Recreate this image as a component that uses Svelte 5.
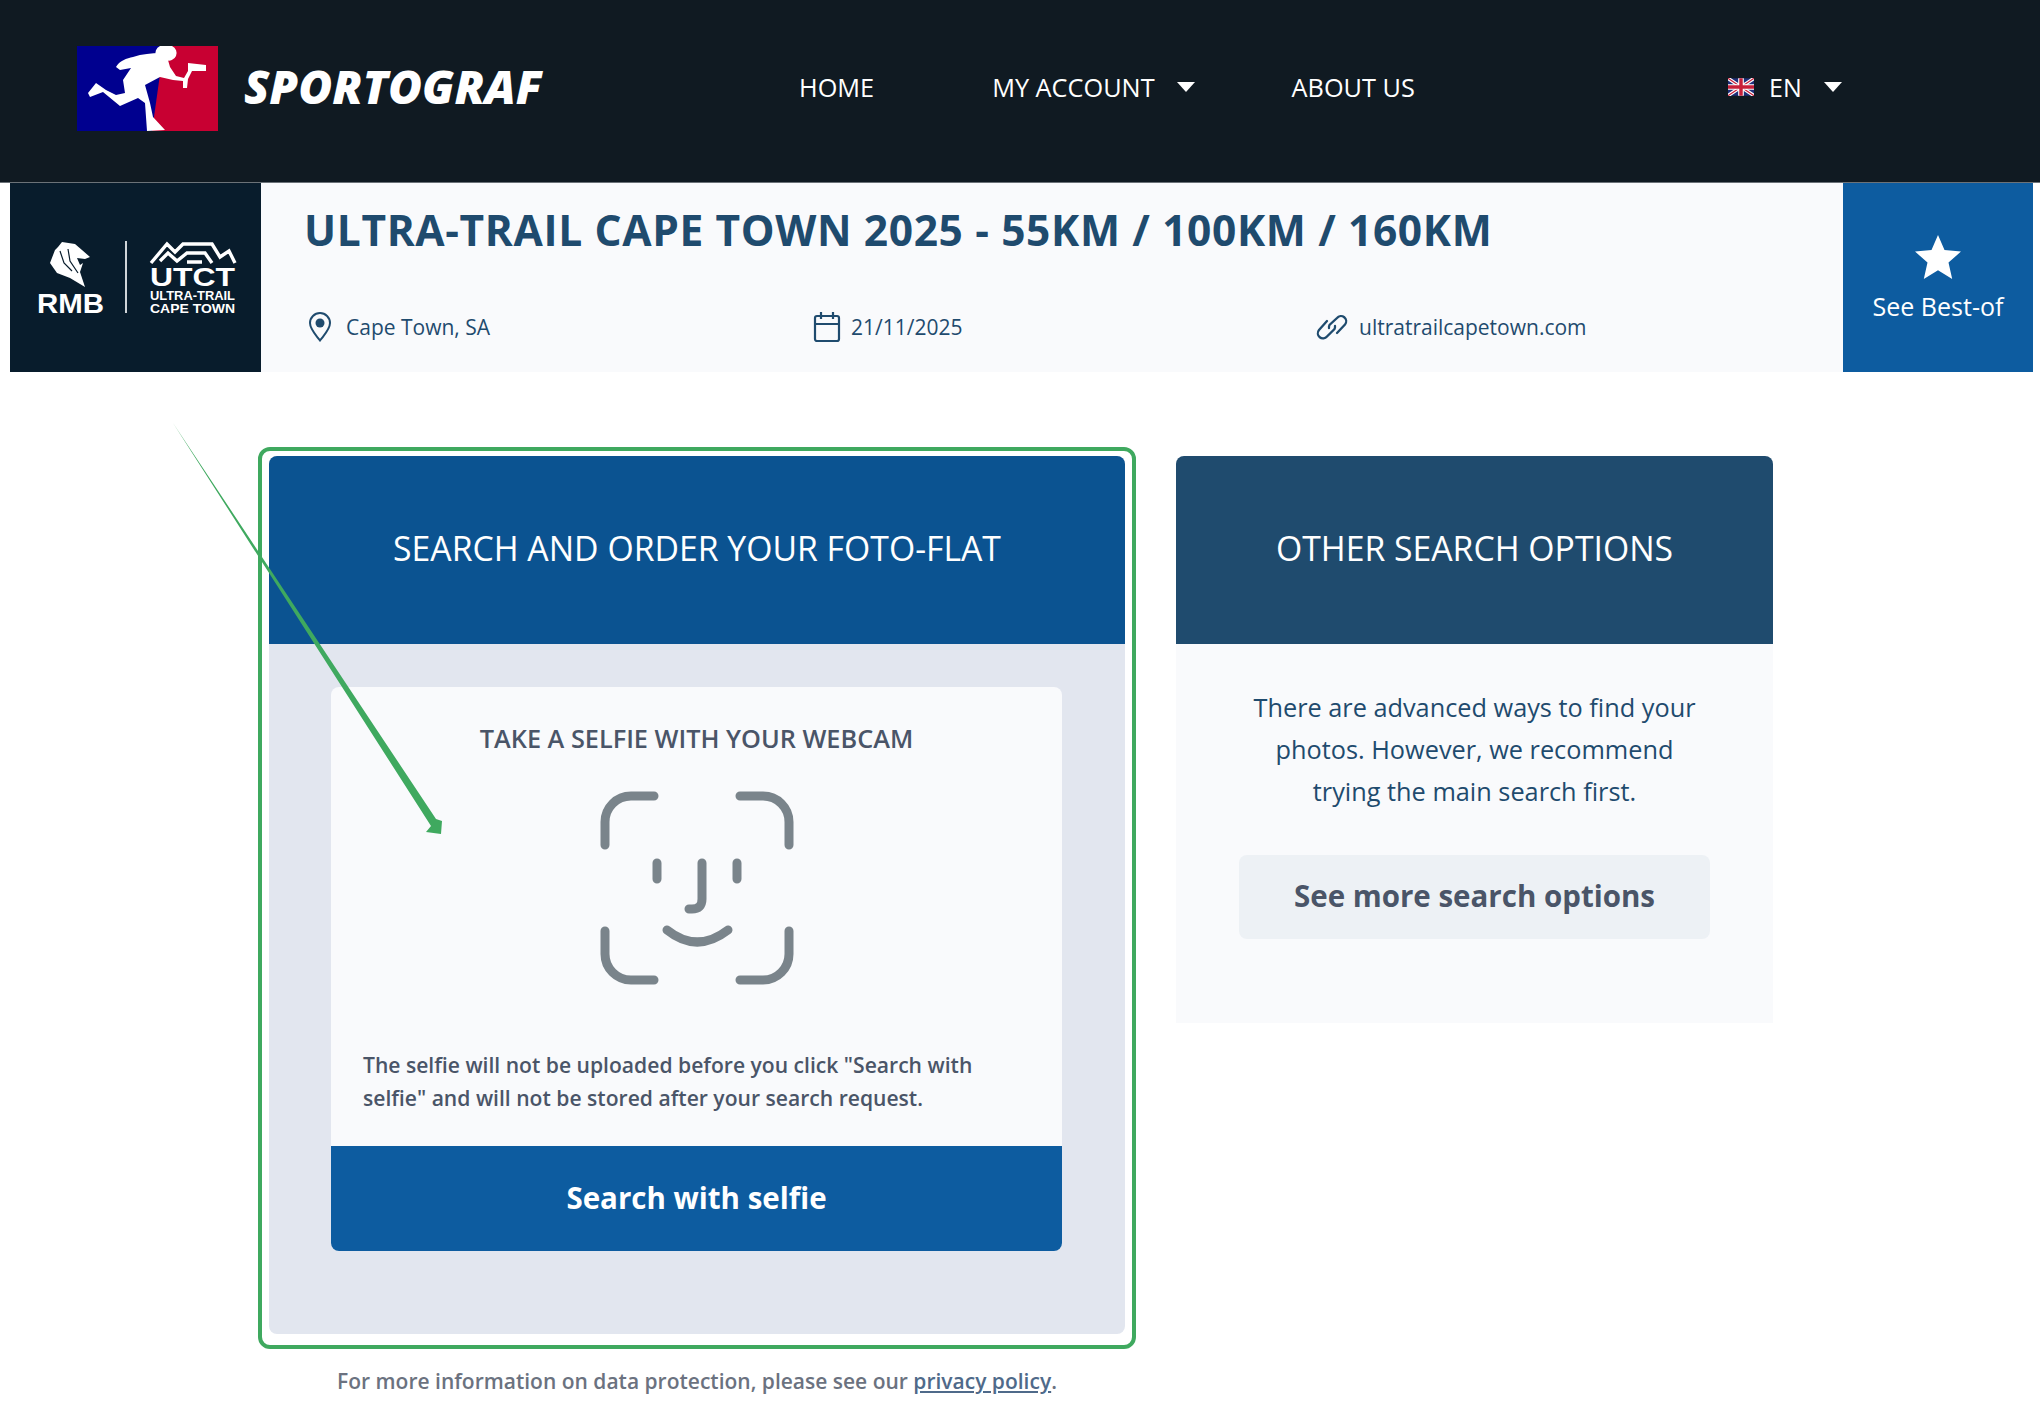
<script>
  const navItems = [
    { label: 'HOME', caret: false },
    { label: 'MY ACCOUNT', caret: true },
    { label: 'ABOUT US', caret: false }
  ]
</script>

<header class="topbar">
  <a class="brand" href="#home">
    <svg class="brand-mark" width="141" height="85" viewBox="0 0 141 85" aria-hidden="true">
      <rect width="141" height="85" fill="#c80032" />
      <polygon points="0,0 87,0 75,85 0,85" fill="#00008f" />
      <path fill="#fff" d="M83 0 H95 A7.5 7.5 0 0 1 89 14 A7.5 7.5 0 0 1 83 0 Z" />
      <path
        fill="#fff"
        d="M39 21 C42 15 50 12 56 11 C65 8 75 7 83 7 L91 14 L93 21 L99 30 L107 32 L111 25 L111 17 L129 19 L129 25 L115 25 L111 33 L110 42 L106 42 L106 35 L96 34 L83 31 L68 39 L73 57 L76 71 L88 84 L70 85 L68 57 L61 52 L43 60 L26 46 L13 51 L11 47 L19 37 L29 44 L39 49 L48 47 L46 34 L54 22 L43 24 Z"
      />
    </svg>
    <span class="brand-name">SPORTOGRAF</span>
  </a>

  <nav class="nav">
    {#each navItems as item}
      <a href="#nav" class="nav-link">
        {item.label}
        {#if item.caret}<span class="caret"></span>{/if}
      </a>
    {/each}
  </nav>

  <div class="lang">
    <svg width="26" height="18" viewBox="0 0 60 40" aria-hidden="true">
      <rect width="60" height="40" fill="#1f2f7a" />
      <path d="M0 0 L60 40 M60 0 L0 40" stroke="#fff" stroke-width="8" />
      <path d="M0 0 L60 40 M60 0 L0 40" stroke="#c8203a" stroke-width="3" />
      <path d="M30 0 V40 M0 20 H60" stroke="#fff" stroke-width="13" />
      <path d="M30 0 V40 M0 20 H60" stroke="#c8203a" stroke-width="8" />
    </svg>
    <span>EN</span>
    <span class="caret"></span>
  </div>
</header>

<section class="event">
  <svg class="event-logo" width="251" height="189" viewBox="0 0 251 189" aria-hidden="true">
    <rect width="251" height="189" fill="#081c2c" />
    <path
      fill="#fff"
      d="M52 59 L65 61 L72 67 L80 74 L75 76 L67 75 L70 82 L73 80 L70 89 L75 104 L60 95 L47 90 L40 80 L45 67 L48 64 Z"
    />
    <path fill="none" stroke="#081c2c" stroke-width="1.2" d="M50 68 L54 80 L62 88 M58 66 L60 78 L68 90" />
    <text x="27" y="130" class="rmb" textLength="67" lengthAdjust="spacingAndGlyphs">RMB</text>
    <rect x="115" y="58" width="2" height="72" fill="#cfd4d8" />
    <path
      fill="none"
      stroke="#fff"
      stroke-width="3.4"
      d="M141 80 L157 61 L165 69 L173 61 L202 61 L210 74 L219 68 L225 80 M150 78 L158 70 L167 78 L177 70 L195 70 L202 80 M177 79 L192 79"
    />
    <text x="140" y="103" class="utct" textLength="85" lengthAdjust="spacingAndGlyphs">UTCT</text>
    <text x="140" y="117" class="utct-sub" textLength="85" lengthAdjust="spacingAndGlyphs">ULTRA-TRAIL</text>
    <text x="140" y="130" class="utct-sub" textLength="85" lengthAdjust="spacingAndGlyphs">CAPE TOWN</text>
  </svg>

  <div class="event-info">
    <h1>ULTRA-TRAIL CAPE TOWN 2025 - 55KM / 100KM / 160KM</h1>
    <div class="meta">
      <div class="meta-item">
        <svg width="26" height="30" viewBox="0 0 26 30" fill="none" stroke="#1f4b6e" stroke-width="2" aria-hidden="true">
          <path d="M13 28.5 C8 22 3 17 3 11 A10 10 0 0 1 23 11 C23 17 18 22 13 28.5 Z" />
          <circle cx="13" cy="11" r="4.5" fill="#1f4b6e" stroke="none" />
        </svg>
        <span>Cape Town, SA</span>
      </div>
      <div class="meta-item date">
        <svg width="28" height="32" viewBox="0 0 28 32" fill="none" stroke="#1f4b6e" stroke-width="2.2" aria-hidden="true">
          <rect x="2" y="5" width="24" height="25" rx="2" />
          <path d="M2 13 H26 M8 1 V8 M20 1 V8" />
        </svg>
        <span>21/11/2025</span>
      </div>
      <div class="meta-item link">
        <svg width="32" height="26" viewBox="0 0 32 26" fill="none" stroke="#1f4b6e" stroke-width="2.3" stroke-linecap="round" aria-hidden="true">
          <path d="M13 14 A5 5 0 0 1 13.5 11 L21 4 A5 5 0 0 1 29 10.5 L21 19" />
          <path d="M19 12 A5 5 0 0 1 18.5 15 L11 22.5 A5 5 0 0 1 3 16 L11 7" />
        </svg>
        <span>ultratrailcapetown.com</span>
      </div>
    </div>
  </div>

  <a class="best-of" href="#best">
    <svg width="46" height="44" viewBox="0 0 46 44" aria-hidden="true">
      <polygon fill="#fff" points="23,0 29.5,15 46,16.6 33.5,27.4 37.2,44 23,35.2 8.8,44 12.5,27.4 0,16.6 16.5,15" />
    </svg>
    <span>See Best-of</span>
  </a>
</section>

<main class="content">
  <div class="left-col">
    <section class="card primary">
      <h2 class="card-head">SEARCH AND ORDER YOUR FOTO-FLAT</h2>
      <div class="card-body">
        <div class="selfie">
          <h3>TAKE A SELFIE WITH YOUR WEBCAM</h3>
          <svg class="face" width="200" height="200" viewBox="0 0 200 200" fill="none" stroke="#7a848b" stroke-width="9" stroke-linecap="round" aria-hidden="true">
            <path d="M8 56 V33 A26 26 0 0 1 34 7 H57" />
            <path d="M143 7 H166 A26 26 0 0 1 192 33 V56" />
            <path d="M8 142 V165 A26 26 0 0 0 34 191 H57" />
            <path d="M143 191 H166 A26 26 0 0 0 192 165 V142" />
            <path d="M60 74 V90 M140 74 V90" />
            <path d="M105 74 V110 Q105 120 95 120 H92" />
            <path d="M70 141 Q100 165 131 141" />
          </svg>
          <p>The selfie will not be uploaded before you click "Search with selfie" and will not be stored after your search request.</p>
          <button class="selfie-btn">Search with selfie</button>
        </div>
      </div>
    </section>
    <div class="frame"></div>
    <p class="privacy">For more information on data protection, please see our <a href="#privacy">privacy policy</a>.</p>
  </div>

  <section class="card secondary">
    <h2 class="card-head">OTHER SEARCH OPTIONS</h2>
    <div class="card-body">
      <p>There are advanced ways to find your photos. However, we recommend trying the main search first.</p>
      <button class="more-btn">See more search options</button>
    </div>
  </section>
</main>

<!-- annotation arrow drawn over the page -->
<svg class="arrow" width="2040" height="1420" viewBox="0 0 2040 1420" aria-hidden="true">
  <polygon fill="#3fa95f" points="173,423 436,819 442,821 441,834 426,832 431,826" />
</svg>

<style>
  :global(body) {
    margin: 0;
    background: #fff;
    font-family: 'Open Sans', 'Noto Sans', sans-serif;
  }

  h1, h2, h3, p {
    margin: 0;
  }

  a {
    color: inherit;
    text-decoration: none;
  }

  .topbar {
    height: 183px;
    box-sizing: border-box;
    background: #101a22;
    color: #fff;
    display: flex;
    align-items: center;
    padding: 0 0 9px 77px;
    border-bottom: 1px solid #6b7278;
  }

  .brand {
    display: flex;
    align-items: center;
    gap: 26px;
    width: 722px;
    margin-top: 4px;
  }

  .brand-name {
    font-size: 46.3px;
    font-weight: 800;
    font-style: italic;
    margin-bottom: 4px;
  }

  .nav {
    display: flex;
    align-items: center;
    gap: 97px;
    width: 929px;
    font-size: 25.3px;
  }

  .nav-link {
    display: flex;
    align-items: center;
    gap: 22px;
  }

  .nav-link:first-child {
    margin-right: 21px;
  }

  .caret {
    width: 0;
    height: 0;
    border-left: 9px solid transparent;
    border-right: 9px solid transparent;
    border-top: 10px solid #fff;
  }

  .lang {
    display: flex;
    align-items: center;
    gap: 15px;
    font-size: 25px;
  }

  .lang .caret {
    margin-left: 7px;
  }

  .event {
    display: flex;
    height: 189px;
    margin: 0 7px 0 10px;
    background: #f9fafc;
  }

  .event-logo {
    flex: none;
  }

  .event-logo text {
    fill: #fff;
    font-family: 'Liberation Sans', sans-serif;
  }

  .rmb {
    font-size: 28px;
    font-weight: 700;
  }

  .utct {
    font-size: 25px;
    font-weight: 700;
  }

  .utct-sub {
    font-size: 13px;
    font-weight: 700;
  }

  .event-info {
    flex: 1;
    padding: 19px 0 0 43px;
  }

  h1 {
    font-size: 42.5px;
    line-height: 56px;
    font-weight: 700;
    color: #1f4b6e;
    letter-spacing: 0.63px;
  }

  .meta {
    display: grid;
    grid-template-columns: 506px 503px auto;
    margin-top: 49px;
    padding-left: 3px;
    font-size: 21px;
    color: #1f4b6e;
  }

  .meta-item {
    display: flex;
    align-items: center;
    gap: 13px;
    height: 40px;
  }

  .meta-item.date {
    gap: 10px;
  }

  .meta-item.link {
    gap: 11px;
  }

  .best-of {
    flex: none;
    width: 190px;
    box-sizing: border-box;
    padding-top: 3px;
    background: #0d5ca0;
    color: #fff;
    font-size: 25px;
    display: flex;
    flex-direction: column;
    align-items: center;
    justify-content: center;
    gap: 10px;
  }

  .content {
    display: flex;
    align-items: flex-start;
    gap: 51px;
    padding: 84px 0 0 269px;
  }

  .left-col {
    position: relative;
    width: 856px;
  }

  .card {
    border-radius: 8px 8px 0 0;
    overflow: hidden;
    background: #f9fafc;
  }

  .card.primary {
    background: #e2e6ef;
    border-radius: 8px;
    height: 878px;
  }

  .card.secondary {
    width: 597px;
    height: 567px;
  }

  .card-head {
    height: 188px;
    box-sizing: border-box;
    padding-bottom: 4px;
    display: flex;
    align-items: center;
    justify-content: center;
    color: #fff;
    font-size: 33.75px;
    font-weight: 400;
  }

  .primary .card-head {
    background: #0b5391;
  }

  .secondary .card-head {
    background: #1f4b6e;
  }

  .primary .card-body {
    padding: 43px 63px 0 62px;
  }

  .selfie {
    background: #f9fafc;
    border-radius: 8px;
    height: 564px;
    display: flex;
    flex-direction: column;
    align-items: center;
    overflow: hidden;
  }

  h3 {
    margin-top: 34px;
    font-size: 25.3px;
    line-height: 34px;
    font-weight: 600;
    color: #4a5568;
  }

  .face {
    margin-top: 34px;
    display: block;
  }

  .selfie p {
    align-self: stretch;
    padding: 0 32px;
    margin-top: 60px;
    font-size: 21.1px;
    line-height: 32.5px;
    font-weight: 600;
    color: #4a5568;
  }

  .selfie-btn {
    margin-top: auto;
    width: 100%;
    height: 105px;
    padding-bottom: 4px;
    border: 0;
    background: #0d5ca0;
    color: #fff;
    font: 700 29.5px 'Open Sans', sans-serif;
  }

  .frame {
    position: absolute;
    top: -9px;
    left: -11px;
    right: -11px;
    height: 902px;
    border: 4px solid #3fa95f;
    border-radius: 12px;
    box-sizing: border-box;
    pointer-events: none;
  }

  .privacy {
    margin-top: 32px;
    text-align: center;
    font-size: 21px;
    line-height: 30px;
    font-weight: 600;
    color: #6b7280;
  }

  .privacy a {
    color: #4f6a8a;
    text-decoration: underline;
  }

  .secondary .card-body {
    padding: 42px 63px 0;
    text-align: center;
  }

  .secondary p {
    font-size: 25.3px;
    line-height: 42px;
    color: #1f4b6e;
  }

  .more-btn {
    margin-top: 43px;
    width: 100%;
    height: 84px;
    padding-bottom: 5px;
    border: 0;
    border-radius: 8px;
    background: #edf1f5;
    color: #4a5568;
    font: 700 29.5px 'Open Sans', sans-serif;
  }

  .arrow {
    position: absolute;
    top: 0;
    left: 0;
    pointer-events: none;
  }
</style>
